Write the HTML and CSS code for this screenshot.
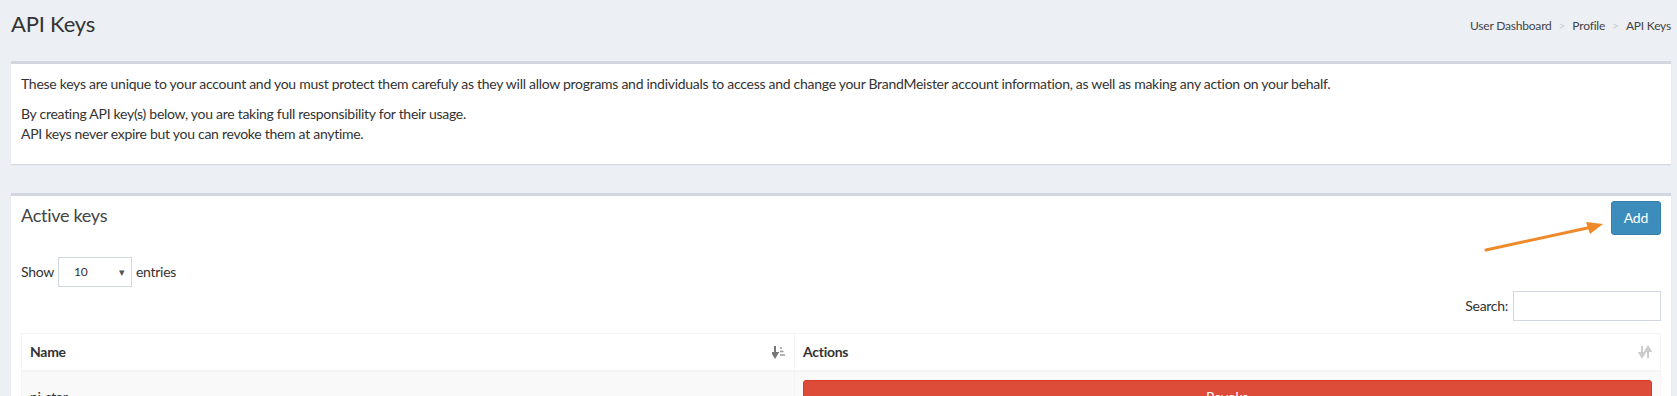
FILE: index.html
```html
<!DOCTYPE html>
<html lang="en">
<head>
    <meta charset="UTF-8">
    <title>API Keys</title>
    <link rel="stylesheet" href="styles.css">
</head>
<body>
    <div class="content">
        <div class="content-header">
            <h1>API Keys</h1>
            <ol class="breadcrumb">
                <li><a href="#">User Dashboard</a></li>
                <li><a href="#">Profile</a></li>
                <li class="active">API Keys</li>
            </ol>
        </div>

        <div class="box">
            <div class="box-body">
                <p>These keys are unique to your account and you must protect them carefuly as they will allow programs and individuals to access and change your BrandMeister account information, as well as making any action on your behalf.</p>
                <p>By creating API key(s) below, you are taking full responsibility for their usage.<br>API keys never expire but you can revoke them at anytime.</p>
            </div>
        </div>

        <div class="box">
            <div class="box-header">
                <h3>Active keys</h3>
                <button class="btn btn-primary">Add</button>
            </div>
            <div class="box-body">
                <div class="dt-length">
                    Show
                    <span class="select"><span>10</span><span class="caret">&#9662;</span></span>
                    entries
                </div>
                <div class="dt-filter">
                    <label>Search:</label>
                    <input type="search">
                </div>
                <table class="table">
                    <thead>
                        <tr>
                            <th class="col-name">Name
                                <svg class="sort" width="14" height="14" viewBox="0 0 14 14">
                                    <path d="M3 1v9M0.5 8l2.5 4 2.5-4z" stroke="#777" stroke-width="2" fill="#777"/>
                                    <path d="M8 3h2M8 6.5h3.5M8 10h5" stroke="#999" stroke-width="1.6"/>
                                </svg>
                            </th>
                            <th>Actions
                                <svg class="sort" width="14" height="14" viewBox="0 0 14 14">
                                    <path d="M4 1v9M1.5 8l2.5 4 2.5-4z" stroke="#ccc" stroke-width="2" fill="#ccc"/>
                                    <path d="M10 13V4M7.5 6l2.5-4 2.5 4z" stroke="#ccc" stroke-width="2" fill="#ccc"/>
                                </svg>
                            </th>
                        </tr>
                    </thead>
                    <tbody>
                        <tr>
                            <td>pi-star</td>
                            <td><button class="btn btn-danger btn-block">Revoke</button></td>
                        </tr>
                    </tbody>
                </table>
            </div>
        </div>
    </div>

    <svg class="arrow" width="140" height="40" viewBox="0 0 140 40">
        <line x1="4" y1="30" x2="110" y2="7" stroke="#ee8a2a" stroke-width="3" stroke-linecap="round"/>
        <polygon points="121,4 104,2 108,14" fill="#ee8a2a"/>
    </svg>
</body>
</html>
```

FILE: styles.css
```css
body {
    margin: 0;
    background-color: #ecf0f5;
    font-family: Lato, "Open Sans", sans-serif;
    font-size: 14px;
    line-height: 20px;
    letter-spacing: -0.28px;
    color: #333;
}
.content {
    padding: 0 6px 0 11px;
}
.content-header {
    display: flex;
    justify-content: space-between;
    align-items: center;
    height: 48px;
    margin-bottom: 13px;
}
.content-header h1 {
    margin: 0;
    font-size: 22px;
    font-weight: 400;
    letter-spacing: -0.2px;
    color: #333;
}
.breadcrumb {
    display: flex;
    list-style: none;
    margin: 4px 0 0;
    padding: 0;
    font-size: 12px;
    letter-spacing: -0.2px;
}
.breadcrumb li + li::before {
    content: ">";
    color: #ccc;
    padding: 0 7px;
}
.breadcrumb a {
    color: #444;
    text-decoration: none;
}
.breadcrumb .active {
    color: #444;
}
.box {
    background: #fff;
    border-top: 3px solid #d2d6de;
    box-shadow: 0 1px 1px rgba(0, 0, 0, 0.1);
    margin-bottom: 29px;
}
.box-body {
    padding: 10px;
}
.box-body p {
    margin: 0 0 10px;
}
.box-header {
    display: flex;
    justify-content: space-between;
    align-items: flex-start;
    padding: 5px 10px;
}
.box-header h3 {
    margin: 5px 0;
    font-size: 18px;
    font-weight: 400;
    line-height: 1;
    color: #444;
}
.btn {
    font-family: inherit;
    font-size: 14px;
    line-height: 20px;
    letter-spacing: inherit;
    padding: 6px 12px;
    border: 1px solid transparent;
    border-radius: 3px;
    color: #fff;
    cursor: pointer;
}
.btn-primary {
    background-color: #3c8dbc;
    border-color: #367fa9;
}
.btn-danger {
    background-color: #dd4b39;
    border-color: #d73925;
}
.btn-block {
    display: block;
    width: 100%;
}
.dt-length {
    display: flex;
    align-items: center;
    gap: 4px;
    margin-top: 7px;
    height: 30px;
}
.select {
    display: flex;
    align-items: center;
    justify-content: space-between;
    box-sizing: border-box;
    width: 74px;
    height: 30px;
    padding: 0 6px 0 15px;
    border: 1px solid #d2d6de;
    font-size: 12px;
}
.caret {
    font-size: 11px;
    color: #555;
}
.dt-filter {
    display: flex;
    justify-content: flex-end;
    align-items: center;
    gap: 5px;
    margin-top: 4px;
}
.dt-filter input {
    box-sizing: border-box;
    width: 148px;
    height: 30px;
    border: 1px solid #d2d6de;
}
.table {
    width: 100%;
    margin-top: 12px;
    border-collapse: collapse;
    border: 1px solid #f4f4f4;
}
.table th {
    text-align: left;
    padding: 8px;
    border: 1px solid #f4f4f4;
    border-bottom-width: 2px;
}
.col-name {
    width: 756px;
}
.table td {
    padding: 8px;
    border: 1px solid #f4f4f4;
    background: #f9f9f9;
}
.sort {
    float: right;
    margin-top: 3px;
}
.arrow {
    position: absolute;
    left: 1482px;
    top: 220px;
}
```
